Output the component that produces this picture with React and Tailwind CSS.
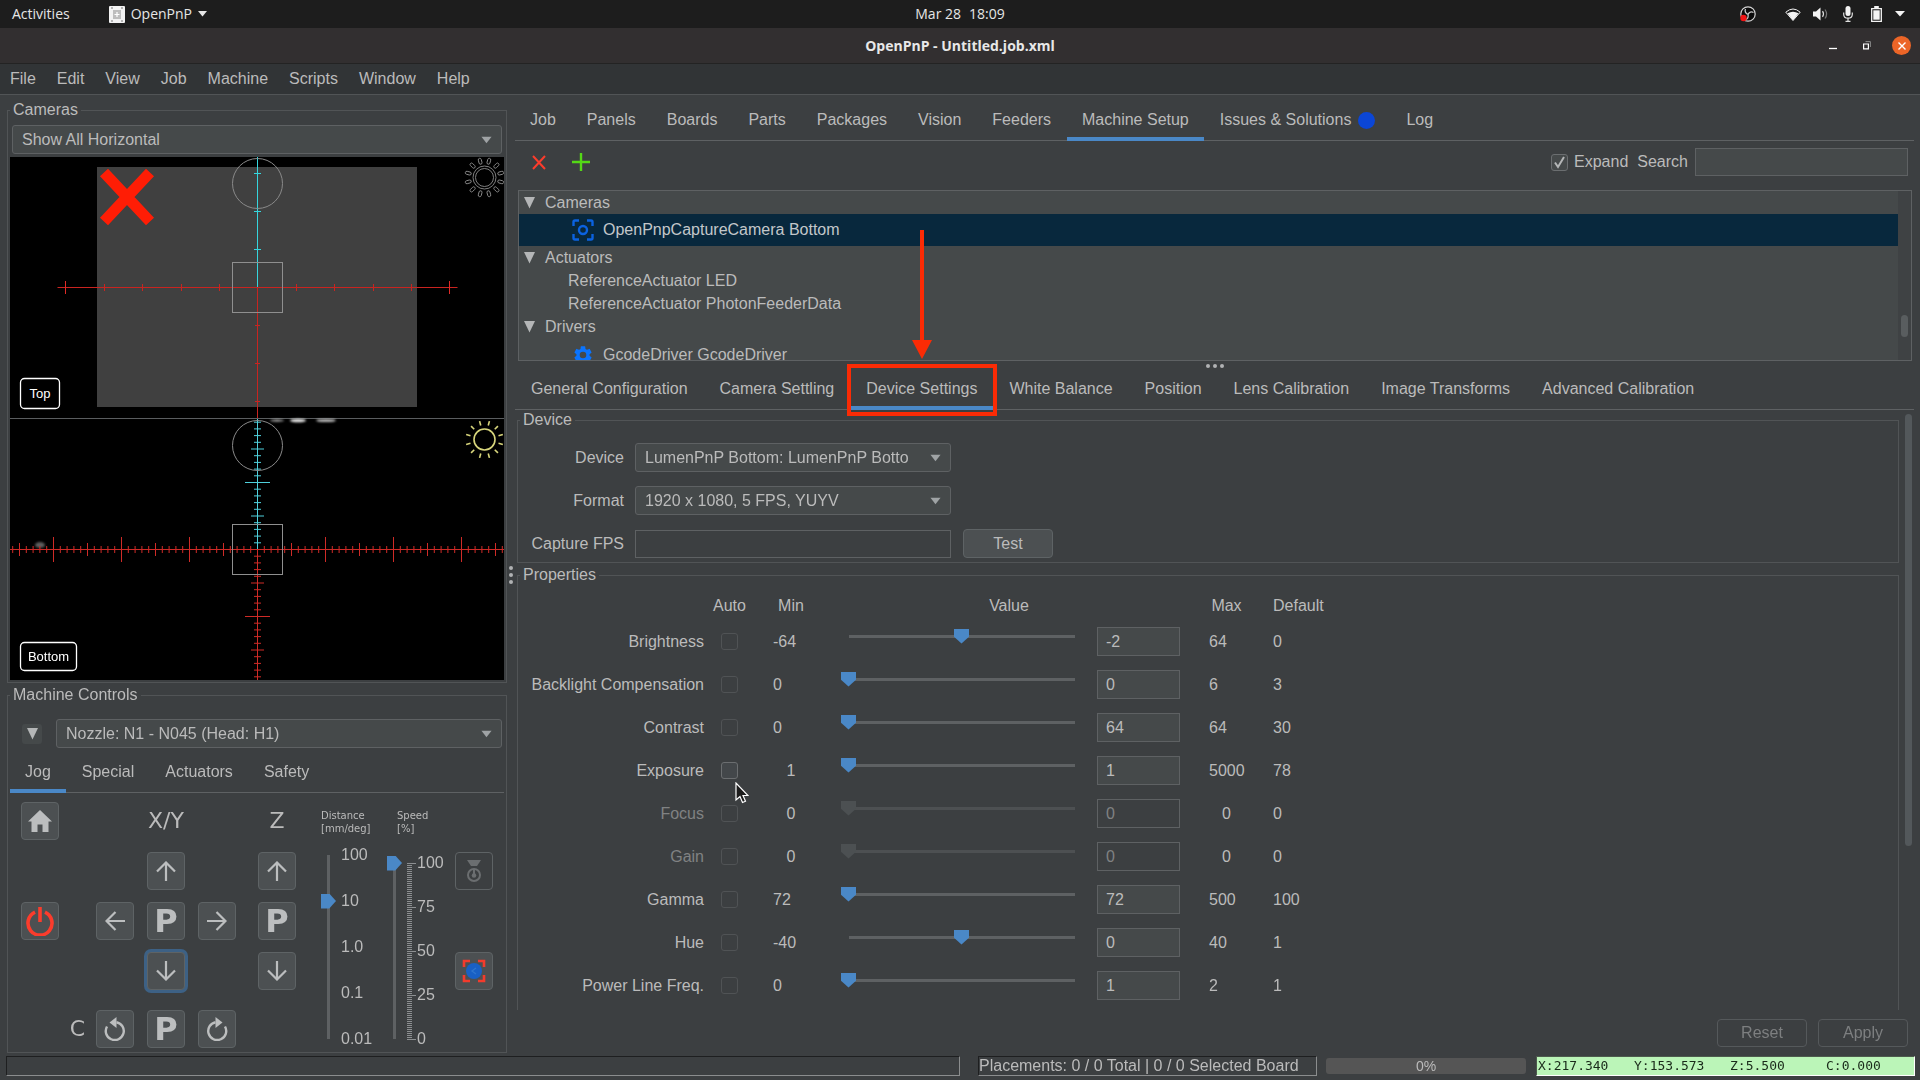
import React from "react";

const UI_FONT = "font-['Liberation_Sans',Arial,sans-serif]";
const SHELL_FONT = "font-['Open_Sans','Noto_Sans',sans-serif]";

const MENUS = ["File", "Edit", "View", "Job", "Machine", "Scripts", "Window", "Help"];
const MAIN_TABS = ["Job", "Panels", "Boards", "Parts", "Packages", "Vision", "Feeders", "Machine Setup", "Issues & Solutions", "Log"];
const CAMERA_TABS = ["General Configuration", "Camera Settling", "Device Settings", "White Balance", "Position", "Lens Calibration", "Image Transforms", "Advanced Calibration"];

const PROPERTIES = [
  { name: "Brightness", min: -64, max: 64, value: -2, def: 0, pos: 50 },
  { name: "Backlight Compensation", min: 0, max: 6, value: 0, def: 3, pos: 0 },
  { name: "Contrast", min: 0, max: 64, value: 64, def: 30, pos: 0 },
  { name: "Exposure", min: 1, max: 5000, value: 1, def: 78, pos: 0, centerMin: true, auto: true },
  { name: "Focus", min: 0, max: 0, value: 0, def: 0, pos: 0, centerMin: true, centerMax: true, off: true },
  { name: "Gain", min: 0, max: 0, value: 0, def: 0, pos: 0, centerMin: true, centerMax: true, off: true },
  { name: "Gamma", min: 72, max: 500, value: 72, def: 100, pos: 0 },
  { name: "Hue", min: -40, max: 40, value: 0, def: 1, pos: 50 },
  { name: "Power Line Freq.", min: 0, max: 2, value: 1, def: 1, pos: 0 },
];

/* ---------- shell ---------- */

function TopBar() {
  return (
    <header className={`grid h-7 grid-cols-[1fr_auto_1fr] items-center bg-[#1d1d1d] text-sm text-[#e6e6e6] ${SHELL_FONT}`}>
      <div className="flex items-center">
        <button className="ml-3">Activities</button>
        <button className="ml-[39px] flex items-center">
          <svg width="16" height="17" viewBox="0 0 16 17" className="mr-[6px]">
            <rect width="16" height="17" rx="1" fill="#f2f2f2" />
            <rect x="4" y="4" width="8" height="9" fill="#bdbdbd" />
            <path d="M5.500 8.500h5M8 6v5" stroke="#fff" strokeWidth="1.200" />
            <path d="M2 2h2M12 2h2M2 15h2M12 15h2" stroke="#777" />
          </svg>
          OpenPnP
          <svg width="9" height="6" viewBox="0 0 9 6" className="ml-[6px]"><path d="M0 0h9L4.500 5.500z" fill="#e6e6e6" /></svg>
        </button>
      </div>
      <div className="flex gap-2"><span>Mar 28</span><span>18:09</span></div>
      <div className="flex items-center justify-end pr-[15px]">
        <svg width="16" height="16" viewBox="0 0 16 16" className="mr-[29px]">
          <circle cx="8" cy="8" r="7.200" fill="#0b0b0b" stroke="#d5d5d5" strokeWidth="1.200" />
          <path d="M8 8.500C5.500 7.500 4.500 5 5.500 3M8 8.500c1-2.500 3.500-3.200 5.500-2M8 8.500c.6 2.500-.5 4.500-2.500 5.200" fill="none" stroke="#c8c8c8" strokeWidth="1.300" />
          <circle cx="3.500" cy="12" r="3.200" fill="#f01414" />
        </svg>
        <svg width="16" height="13" viewBox="0 0 16 13" className="mr-3">
          <path d="M.8 4.200Q8-2.200 15.200 4.200L8 12.500z" fill="none" stroke="#f0f0f0" strokeWidth="1" />
          <path d="M2.500 5.300Q8 2 13.500 5.300L8 12.500z" fill="#f4f4f4" />
        </svg>
        <svg width="16" height="14" viewBox="0 0 16 14" className="mr-[14px]">
          <path d="M0 4.500h3L7.500.5v13L3 9.500H0z" fill="#f4f4f4" />
          <path d="M9.500 4.200q2 2.800 0 5.600" fill="none" stroke="#ddd" strokeWidth="1.200" />
          <path d="M12 2.500q3.200 4.500 0 9" fill="none" stroke="#777" strokeWidth="1.200" />
        </svg>
        <svg width="10" height="16" viewBox="0 0 10 16" className="mr-[18px]">
          <rect x="2.500" y="0" width="5" height="10" rx="2.500" fill="#f4f4f4" />
          <path d="M.7 6.500v1.700q0 4 4.300 4t4.300-4V6.500M5 12v3M2.500 15.300h5" fill="none" stroke="#e0e0e0" strokeWidth="1.200" />
        </svg>
        <svg width="11" height="16" viewBox="0 0 11 16" className="mr-[13px]">
          <path d="M.7 2.700h9.600v12.600H.7z" fill="none" stroke="#f4f4f4" strokeWidth="1.300" />
          <rect x="3.200" y="0" width="4.600" height="2.500" fill="#f4f4f4" />
          <rect x="2.300" y="4.300" width="6.400" height="9.400" fill="#f4f4f4" />
        </svg>
        <svg width="10" height="6" viewBox="0 0 10 6"><path d="M0 0h10L5 5.500z" fill="#f4f4f4" /></svg>
      </div>
    </header>
  );
}

function TitleBar() {
  return (
    <div className={`grid h-9 grid-cols-[1fr_auto_1fr] items-center border-b border-[#232323] bg-[#322f30] ${SHELL_FONT}`}>
      <span />
      <h1 className="text-sm font-bold text-[#e8e8e8]">OpenPnP - Untitled.job.xml</h1>
      <div className="flex items-center justify-end pr-[9px]">
        <button aria-label="Minimize" className="mr-[26px]">
          <svg width="8" height="8" viewBox="0 0 8 8"><path d="M0 6.500h8" stroke="#fff" strokeWidth="1.300" /></svg>
        </button>
        <button aria-label="Restore" className="mr-[21px]">
          <svg width="8" height="9" viewBox="0 0 8 9"><path d="M.6 3h4.800v4.900H.6z" fill="none" stroke="#fff" strokeWidth="1.200" /><path d="M2.500.6h4.900v5.400" fill="none" stroke="#8a8a8a" /></svg>
        </button>
        <button aria-label="Close" className="flex size-[19px] items-center justify-center rounded-full bg-[#ec6527]">
          <svg width="8" height="8" viewBox="0 0 8 8"><path d="M.5.5l7 7M7.500.5l-7 7" stroke="#fff" strokeWidth="1.400" /></svg>
        </button>
      </div>
    </div>
  );
}

function MenuBar() {
  return (
    <nav className="flex h-[31px] items-center gap-px border-b border-[#515456] bg-[#313436]">
      {MENUS.map((m) => <button key={m} className="px-[10px]">{m}</button>)}
    </nav>
  );
}

/* ---------- shared controls ---------- */

function Group({ title, className = "", children }) {
  return (
    <fieldset className={`min-w-0 border border-[#515456] ${className}`}>
      <legend className="ml-[2px] px-[3px] leading-5">{title}</legend>
      {children}
    </fieldset>
  );
}

function Tab({ label, active, pad, children }) {
  return (
    <button role="tab" aria-selected={!!active} className={`relative flex h-[42px] items-center whitespace-nowrap ${pad} ${active ? "shadow-[inset_0_-4px_0_#4a88c7]" : "shadow-[inset_0_-1px_0_#5e6163]"}`}>
      {label}
      {children}
    </button>
  );
}

function TabBar({ className = "", children }) {
  return <div role="tablist" className={`flex shadow-[inset_0_-1px_0_#5e6163] ${className}`}>{children}</div>;
}

function Select({ label, id, text, className = "" }) {
  return (
    <div className={`relative ${className}`}>
      <select id={id} aria-label={label} className="h-[29px] w-full appearance-none rounded-[3px] border border-[#5e6163] bg-[#45494a] pr-7 pl-[9px] text-[#bbbbbb]">
        <option>{text}</option>
      </select>
      <svg width="11" height="8" viewBox="0 0 12 8" className="pointer-events-none absolute top-[11px] right-[10px]"><path d="M.5.5h11L6 7.500z" fill="#9fa3a5" /></svg>
    </div>
  );
}

const DownTriangle = ({ className = "" }) => (
  <svg width="11" height="12" viewBox="0 0 11 12" className={className}><path d="M0 0h11L5.500 11.500z" fill="#b4b6b7" /></svg>
);

/* ---------- camera views ---------- */

function Sun({ cx, cy, lit }) {
  return (
    <g transform={`translate(${cx} ${cy})`} fill="none" stroke={lit ? "#d8d67c" : "#8c8c8c"}>
      <circle r={lit ? 10.5 : 11.5} strokeWidth={lit ? 1.6 : 0.9} />
      {!lit && <circle r="9" strokeWidth="0.900" />}
      {Array.from({ length: 12 }, (_, i) => (
        <g key={i} transform={`rotate(${15 + i * 30})`}>
          {lit ? <path d="M14.500 0h4.500" strokeWidth="1.600" /> : <rect x="13.800" y="-1.500" width="6" height="3" rx="1.500" strokeWidth="0.900" />}
        </g>
      ))}
    </g>
  );
}

function BottomTicks() {
  const step = 6.8;
  const arm = (i) => (i % 10 === 0 ? 12.5 : i % 5 === 0 ? 6.5 : 3.5);
  const out = [];
  for (let i = 1; i <= 36; i++) {
    for (const s of [-1, 1]) {
      const x = 257.5 + s * i * step;
      out.push(<path key={`h${s}${i}`} d={`M${x} ${549.5 - arm(i)}v${2 * arm(i)}`} stroke="#cf2b27" />);
    }
  }
  for (let i = 1; i <= 19; i++) {
    for (const s of [-1, 1]) {
      const y = 549.5 + s * i * 6.7;
      out.push(<path key={`v${s}${i}`} d={`M${257.5 - arm(i)} ${y}h${2 * arm(i)}`} stroke={s < 0 ? "#4fd0dc" : "#cf2b27"} />);
    }
  }
  return <g>{out}</g>;
}

function CameraLabel({ x, y, w, h, text }) {
  return (
    <g>
      <rect x={x} y={y} width={w} height={h} rx="4" fill="#000" stroke="#fff" strokeWidth="1.300" />
      <text x={x + w / 2} y={y + h / 2 + 4} textAnchor="middle" fill="#fff" fontSize="13">{text}</text>
    </g>
  );
}

function CameraViews() {
  return (
    <svg viewBox="10 157 494 523" className="mx-[2px] mt-[3px] mb-[2px] block h-auto w-[calc(100%-4px)] bg-black" role="img" aria-label="Camera views">
      <defs><filter id="smudge"><feGaussianBlur stdDeviation="1" /></filter></defs>
      <rect x="97" y="167" width="320" height="240" fill="#404040" />
      <path d="M104 172.500l46 49M150 172.500l-46 49" stroke="#ff1d05" strokeWidth="11" />
      <path d="M57.500 287.500h400M257.500 287.500v131" stroke="#c92420" />
      <path d="M65.500 281v13M449.500 281v13" stroke="#e02a26" />
      <path d="M104.500 284v7M142.500 284v7M181.500 284v7M219.500 284v7M296.500 284v7M334.500 284v7M373.500 284v7M411.500 284v7" stroke="#c92420" />
      <path d="M255 325.500h5M255 363.500h5M255 401.500h5" stroke="#c92420" />
      <path d="M257.500 157v130M254 173.500h7M254 211.500h7M254 249.500h7" stroke="#35d6de" fill="none" />
      <circle cx="257.500" cy="183.500" r="25" fill="none" stroke="#8a8a8a" />
      <rect x="232.500" y="262.500" width="50" height="50" fill="none" stroke="#8f8f8f" />
      <Sun cx={484.500} cy={177.500} />
      <CameraLabel x={20.500} y={378.500} w={39} h={30} text="Top" />

      <path d="M10 418.500h494" stroke="#5a5d5f" />
      <g filter="url(#smudge)" fill="#e8e8e8">
        <ellipse cx="277" cy="420.500" rx="7" ry="1.200" opacity="0.700" />
        <ellipse cx="298" cy="420.500" rx="8" ry="1.800" />
        <ellipse cx="326" cy="420.500" rx="10" ry="1.600" opacity="0.800" />
        <ellipse cx="40" cy="545" rx="5" ry="3" opacity="0.400" />
      </g>
      <path d="M10 549.500h494M257.500 549.500v130.500" stroke="#cf2b27" />
      <path d="M257.500 419v130" stroke="#4fd0dc" />
      <BottomTicks />
      <circle cx="257.500" cy="445.500" r="25" fill="none" stroke="#8a8a8a" />
      <rect x="232.500" y="524.500" width="50" height="50" fill="none" stroke="#8f8f8f" />
      <Sun cx={484.500} cy={439.500} lit />
      <CameraLabel x={20.500} y={642.500} w={56} h={28} text="Bottom" />
    </svg>
  );
}

/* ---------- jog controls ---------- */

function JogButton({ label, className = "", children }) {
  return (
    <button aria-label={label} className={`flex size-[38px] items-center justify-center rounded-[4px] border border-[#5e6365] bg-[#4c5052] ${className}`}>
      {children}
    </button>
  );
}

const Arrow = ({ className = "" }) => (
  <svg width="20" height="20" viewBox="0 0 20 20" className={className}><path d="M10 20V1.500M1 10.500L10 1.500l9 9" fill="none" stroke="#bcbebf" strokeWidth="2.200" /></svg>
);
const Park = () => <span className="font-['DejaVu_Sans',sans-serif] text-[32px] leading-none font-bold text-[#bcbebf]">P</span>;
const Rotate = ({ className = "" }) => (
  <svg width="22" height="24" viewBox="0 0 22 24" className={className}>
    <path d="M12.500 5.200a9 9 0 1 1-9.500 4.300" fill="none" stroke="#bcbebf" strokeWidth="2.400" />
    <path d="M5.500 5.500L12.500 0v11z" fill="#bcbebf" />
  </svg>
);

const V_SLIDER = "w-[15px] appearance-none bg-transparent bg-[linear-gradient(#5e6163,#5e6163)] bg-no-repeat bg-center [direction:rtl] [writing-mode:vertical-lr] [&::-webkit-slider-thumb]:size-[15px] [&::-webkit-slider-thumb]:appearance-none [&::-webkit-slider-thumb]:bg-[#4a88c7] [&::-webkit-slider-thumb]:[clip-path:polygon(0_0,55%_0,100%_50%,55%_100%,0_100%)]";

function JogPanel() {
  const heading = "font-['DejaVu_Sans',sans-serif] text-[22px] leading-none";
  return (
    <div className="flex pt-[9px] pb-1 pl-[13px]">
      <div className="grid h-fit grid-cols-[38px_37px_51px_51px_60px_38px] grid-rows-[50px_50px_50px_58px_38px]">
        <JogButton label="Home">
          <svg width="24" height="22" viewBox="0 0 24 22"><path d="M12 0L0 11.500h3.500V22h6v-7.500h5V22h6V11.500H24z" fill="#bcbebf" /></svg>
        </JogButton>
        <span className={`col-start-4 flex h-[38px] w-[38px] items-center justify-center ${heading}`}>X/Y</span>
        <span className={`col-start-6 flex h-[38px] items-center justify-center ${heading}`}>Z</span>

        <JogButton label="Y plus" className="col-start-4"><Arrow /></JogButton>
        <JogButton label="Z plus" className="col-start-6"><Arrow /></JogButton>

        <JogButton label="Power" className="col-start-1">
          <svg width="28" height="30" viewBox="0 0 28 30" fill="none" stroke="#fb3c2c" strokeWidth="3.600"><path d="M9 6.200a12 12 0 1 0 10 0M14 1v15" /></svg>
        </JogButton>
        <JogButton label="X minus" className="col-start-3"><Arrow className="-rotate-90" /></JogButton>
        <JogButton label="Park X/Y"><Park /></JogButton>
        <JogButton label="X plus"><Arrow className="rotate-90" /></JogButton>
        <JogButton label="Park Z"><Park /></JogButton>

        <JogButton label="Y minus" className="col-start-4 ring-3 ring-[#3d6185]"><Arrow className="rotate-180" /></JogButton>
        <JogButton label="Z minus" className="col-start-6"><Arrow className="rotate-180" /></JogButton>

        <span className={`col-start-2 flex h-[38px] items-center justify-center ${heading}`}>C</span>
        <JogButton label="Rotate counterclockwise"><Rotate /></JogButton>
        <JogButton label="Park rotation"><Park /></JogButton>
        <JogButton label="Rotate clockwise"><Rotate className="-scale-x-100" /></JogButton>
      </div>

      <div className="ml-[25px] w-[66px] shrink-0 pt-[7px]">
        <label htmlFor="distance" className="block font-['DejaVu_Sans',sans-serif] text-[10px] leading-[13px]">Distance<br />[mm/deg]</label>
        <div className="mt-[11px] flex items-center gap-[5px]">
          <input id="distance" type="range" min="0" max="4" defaultValue="3" className={`h-[199px] bg-[length:3px_184px] ${V_SLIDER}`} />
          <div className="flex h-[202px] flex-col justify-between leading-[18px]">
            {["100", "10", "1.0", "0.1", "0.01"].map((t) => <span key={t}>{t}</span>)}
          </div>
        </div>
      </div>

      <div className="w-[68px] shrink-0 pt-[7px]">
        <label htmlFor="speed" className="ml-[10px] block font-['DejaVu_Sans',sans-serif] text-[10px] leading-[13px]">Speed<br />[%]</label>
        <div className="mt-[19px] flex items-center">
          <input id="speed" type="range" min="0" max="100" defaultValue="100" className={`h-[191px] bg-[length:3px_176px] ${V_SLIDER}`} />
          <svg width="10" height="177" viewBox="0 0 10 177" className="ml-[5px]" stroke="#8c8f91">
            {Array.from({ length: 88 }, (_, i) => <path key={i} d={`M0 ${i * 2 + 0.5}h5`} />)}
            <path d="M0 .5h9M5 44.500h4M5 88.500h4M5 132.500h4M0 176.500h9" />
          </svg>
          <div className="flex h-[194px] flex-col justify-between leading-[18px]">
            {[100, 75, 50, 25, 0].map((t) => <span key={t}>{t}</span>)}
          </div>
        </div>
      </div>

      <div className="flex flex-col gap-[62px] pt-[50px]">
        <JogButton label="Nozzle to camera" className="bg-transparent">
          <svg width="16" height="24" viewBox="0 0 16 24"><path d="M1 1h14l-4 6H5z" fill="#6b6e70" /><circle cx="8" cy="16" r="6" fill="none" stroke="#6b6e70" strokeWidth="2" /><path d="M8 10v6" stroke="#6b6e70" strokeWidth="2" /><circle cx="8" cy="16.500" r="2.300" fill="#6b6e70" /></svg>
        </JogButton>
        <JogButton label="Position camera">
          <svg width="24" height="24" viewBox="0 0 24 24"><path d="M2 8V2h6M16 2h6v6M22 16v6h-6M8 22H2v-6" fill="none" stroke="#f33b2c" strokeWidth="2.600" /><circle cx="12" cy="12" r="8" fill="#1960c4" /><path d="M14 9l-4 3 4 3" fill="none" stroke="#2f75cc" strokeWidth="1.300" /></svg>
        </JogButton>
      </div>
    </div>
  );
}

function LeftPanel() {
  return (
    <aside className="flex w-[26%] min-w-[500px] flex-col">
      <Group title="Cameras" className="mt-[5px]">
        <Select label="Camera layout" text="Show All Horizontal" className="mx-1 mt-[5px]" />
        <CameraViews />
      </Group>
      <Group title="Machine Controls" className="mt-[2px]">
        <div className="mt-[14px] flex items-center pr-1 pl-[14px]">
          <button aria-label="Collapse" className="mr-[14px] flex size-[20px] items-center justify-center rounded-[3px] bg-[#45494a]"><DownTriangle /></button>
          <Select label="Tool" text="Nozzle: N1 - N045 (Head: H1)" className="flex-1" />
        </div>
        <TabBar className="mx-[2px] mt-[3px] gap-px">
          {["Jog", "Special", "Actuators", "Safety"].map((t) => <Tab key={t} label={t} active={t === "Jog"} pad="px-[15px]" />)}
        </TabBar>
        <JogPanel />
      </Group>
    </aside>
  );
}

/* ---------- machine setup ---------- */

function TreeGroup({ label }) {
  return <div className="flex h-[23px] items-center pl-[5px]"><DownTriangle className="mr-[10px]" />{label}</div>;
}

function Tree() {
  return (
    <div className="mr-[2px] ml-[3px] flex h-[171px] overflow-hidden border border-[#5e6163] bg-[#45494a]">
      <div role="tree" className="flex-1">
        <TreeGroup label="Cameras" />
        <div role="treeitem" aria-selected="true" className="flex h-8 items-center bg-[#08283d] pl-[53px] text-[#c3c7ca]">
          <svg width="22" height="22" viewBox="0 0 22 22" className="mr-[9px]" fill="none" stroke="#0b62e0" strokeWidth="2.400"><path d="M1.500 7V3q0-1.500 1.500-1.500h4M15 1.500h4q1.500 0 1.500 1.500v4M20.500 15v4q0 1.500-1.500 1.500h-4M7 20.500H3q-1.500 0-1.500-1.500v-4" /><circle cx="11" cy="11" r="4" /></svg>
          OpenPnpCaptureCamera Bottom
        </div>
        <TreeGroup label="Actuators" />
        <div role="treeitem" className="flex h-[23px] items-center pl-[49px]">ReferenceActuator LED</div>
        <div role="treeitem" className="flex h-[23px] items-center pl-[49px]">ReferenceActuator PhotonFeederData</div>
        <TreeGroup label="Drivers" />
        <div role="treeitem" className="flex h-[34px] items-center pl-[53px]">
          <svg width="22" height="22" viewBox="0 0 24 24" className="mr-[9px]" fill="#0a74ff"><path d="M19.140 12.940c.04-.3.060-.61.060-.94s-.02-.64-.07-.94l2.030-1.580a.49.49 0 0 0 .12-.61l-1.920-3.320a.49.49 0 0 0-.59-.22l-2.390.96c-.5-.38-1.030-.7-1.620-.94l-.36-2.540a.48.48 0 0 0-.48-.41h-3.840a.48.48 0 0 0-.47.410l-.36 2.540c-.59.240-1.130.570-1.620.94l-2.390-.96a.48.48 0 0 0-.59.220L2.740 8.870a.48.48 0 0 0 .12.610l2.030 1.580c-.05.3-.09.630-.09.940s.02.640.070.94l-2.030 1.580a.49.49 0 0 0-.12.610l1.920 3.320c.12.220.37.290.59.220l2.390-.96c.5.380 1.030.7 1.620.94l.36 2.540c.05.240.24.410.48.410h3.840c.24 0 .44-.17.470-.41l.36-2.540c.59-.24 1.130-.56 1.620-.94l2.390.96c.22.080.47 0 .59-.22l1.920-3.320a.48.48 0 0 0-.12-.61zM12 15.600A3.600 3.600 0 1 1 12 8.400a3.600 3.600 0 0 1 0 7.200z" /></svg>
          GcodeDriver GcodeDriver
        </div>
      </div>
      <div className="w-[13px] bg-[#3f4244]"><div className="mx-auto mt-[124px] h-[22px] w-[7px] rounded-full bg-[#595d5f]" /></div>
    </div>
  );
}

function Toolbar() {
  return (
    <div className="flex items-center pt-[7px] pr-[6px] pb-[14px] pl-4">
      <button aria-label="Delete">
        <svg width="16" height="16" viewBox="0 0 16 16"><path d="M2 2l12 13M14 2L2 15" stroke="#fb3c2c" strokeWidth="2" /></svg>
      </button>
      <button aria-label="Add" className="ml-[25px]">
        <svg width="18" height="18" viewBox="0 0 18 18"><path d="M9 0v18M0 9h18" stroke="#54d816" strokeWidth="2.400" /></svg>
      </button>
      <label className="ml-auto flex items-center">
        <span className="relative mr-[6px] size-[17px]">
          <input type="checkbox" defaultChecked className="block size-[17px] appearance-none rounded-[3px] border border-[#6b6e70] bg-[#45494a]" />
          <svg width="13" height="13" viewBox="0 0 13 13" className="pointer-events-none absolute top-[2px] left-[2px]"><path d="M2 6.500l3 4.500 6-10" fill="none" stroke="#b4b6b7" strokeWidth="2" /></svg>
        </span>
        Expand
      </label>
      <label className="ml-[9px] flex items-center gap-[7px]">
        Search
        <input type="text" className="h-7 w-[213px] border border-[#5e6163] bg-[#45494a] px-2" />
      </label>
    </div>
  );
}

const Dots = ({ className = "" }) => (
  <div className={`flex gap-[3px] ${className}`}>
    {[0, 1, 2].map((i) => <span key={i} className="size-[4px] rounded-full bg-[#b0b2b3]" />)}
  </div>
);

function DeviceGroup() {
  return (
    <Group title="Device">
      <div className="mt-[13px] grid grid-cols-[106px_316px_91px] items-center gap-x-[11px] gap-y-[14px] pb-1">
        <label htmlFor="device" className="text-right">Device</label>
        <Select id="device" text="LumenPnP Bottom: LumenPnP Botto" />
        <span />
        <label htmlFor="format" className="text-right">Format</label>
        <Select id="format" text="1920 x 1080, 5 FPS, YUYV" />
        <span />
        <label htmlFor="fps" className="text-right">Capture FPS</label>
        <input id="fps" type="text" readOnly className="h-7 w-full border border-[#5e6163] bg-transparent px-2" />
        <button className="ml-px h-[29px] rounded-[4px] border border-[#5e6365] bg-[#4c5052]">Test</button>
      </div>
    </Group>
  );
}

const H_SLIDER = "mr-[15px] mb-[11px] h-[15px] w-[241px] appearance-none bg-transparent bg-[length:226px_3px] bg-center bg-no-repeat [&::-webkit-slider-thumb]:size-[15px] [&::-webkit-slider-thumb]:appearance-none [&::-webkit-slider-thumb]:[clip-path:polygon(0_0,100%_0,100%_55%,50%_100%,0_55%)]";
const H_SLIDER_ON = "bg-[linear-gradient(#5e6163,#5e6163)] [&::-webkit-slider-thumb]:bg-[#4a88c7]";
const H_SLIDER_OFF = "bg-[linear-gradient(#4d5052,#4d5052)] [&::-webkit-slider-thumb]:bg-[#4c5052]";

function Cursor() {
  return (
    <svg width="14" height="22" viewBox="0 0 14 22" className="pointer-events-none absolute top-5 left-[14px]">
      <path d="M1 1v17l4-3.500L7.500 20.500l3-1.300L8 13.500h5z" fill="#1c1c1c" stroke="#fff" strokeWidth="1.200" />
    </svg>
  );
}

function PropertyRow({ p }) {
  const id = p.name.toLowerCase().replace(/[^a-z]+/g, "-");
  return (
    <tr className="h-[43px]">
      <th scope="row" className={`text-right font-normal ${p.off ? "text-[#808283]" : ""}`}>{p.name}</th>
      <td>
        <span className="relative mx-auto block size-[17px]">
          <input type="checkbox" aria-label={`${p.name} auto`} className={`block size-[17px] appearance-none rounded-[3px] border ${p.auto ? "border-[#6b6e70] bg-[#43474a]" : "border-[#505355]"}`} />
          {p.auto && <Cursor />}
        </span>
      </td>
      <td><span className={`mx-auto block w-9 ${p.centerMin ? "text-center" : ""}`}>{p.min}</span></td>
      <td>
        <div className="flex items-center justify-center">
          <input type="range" aria-label={`${p.name} slider`} min="0" max="100" defaultValue={p.pos} disabled={p.off} className={`${H_SLIDER} ${p.off ? H_SLIDER_OFF : H_SLIDER_ON}`} />
          <input id={id} type="text" aria-label={`${p.name} value`} defaultValue={p.value} disabled={p.off} className={`h-[29px] w-[83px] border border-[#5e6163] px-2 ${p.off ? "bg-transparent text-[#808283]" : "bg-[#45494a]"}`} />
        </div>
      </td>
      <td><span className={`mx-auto block w-[35px] ${p.centerMax ? "text-center" : ""}`}>{p.max}</span></td>
      <td className="pl-[14px]">{p.def}</td>
    </tr>
  );
}

function PropertiesGroup() {
  return (
    <Group title="Properties" className="mt-[2px] flex-1 border-b-0">
      <table className="w-full table-fixed border-collapse">
        <colgroup>
          <col className="w-[186px]" /><col className="w-[51px]" /><col className="w-[72px]" /><col className="w-[367px]" /><col className="w-[65px]" /><col />
        </colgroup>
        <thead>
          <tr className="h-[35px] [&>th]:pt-[6px] [&>th]:font-normal">
            <th /><th>Auto</th><th>Min</th><th className="pr-[3px]">Value</th><th>Max</th><th className="pl-[14px] text-left">Default</th>
          </tr>
        </thead>
        <tbody>{PROPERTIES.map((p) => <PropertyRow key={p.name} p={p} />)}</tbody>
      </table>
    </Group>
  );
}

function RightPanel() {
  return (
    <main className="flex min-w-0 flex-1 flex-col pr-[6px]">
      <TabBar className="mt-1 gap-px">
        {MAIN_TABS.map((t) => (
          <Tab key={t} label={t} active={t === "Machine Setup"} pad="px-[15px]">
            {t.startsWith("Issues") && <span className="ml-[7px] size-[17px] rounded-full bg-[#0b46d6]" />}
          </Tab>
        ))}
      </TabBar>
      <Toolbar />
      <Tree />
      <div className="flex h-[7px] items-end justify-center"><Dots /></div>
      <TabBar>
        {CAMERA_TABS.map((t) => (
          <Tab key={t} label={t} active={t === "Device Settings"} pad="px-4">
            {t === "Device Settings" && (
              <span className="pointer-events-none absolute -top-1 -right-1 -bottom-[6px] -left-[3px] z-10 border-4 border-[#fb2b05]">
                <svg width="20" height="129" viewBox="0 0 20 129" className="absolute bottom-[calc(100%+9px)] left-1/2 -translate-x-1/2"><path d="M8 0h4v110h8l-10 19L0 110h8z" fill="#fb2b05" /></svg>
              </span>
            )}
          </Tab>
        ))}
      </TabBar>
      <div className="flex flex-1">
        <div className="ml-[2px] flex min-w-0 flex-1 flex-col">
          <DeviceGroup />
          <PropertiesGroup />
        </div>
        <div className="mt-1 mr-[2px] ml-[6px] h-[72%] w-[7px] rounded-full bg-[#53585b]" />
      </div>
      <div className="flex justify-end gap-[11px] pt-[9px] pr-[6px] pb-[7px] text-[#7d7f80]">
        <button disabled className="h-7 w-[90px] rounded-[4px] border border-[#55595b]">Reset</button>
        <button disabled className="h-7 w-[90px] rounded-[4px] border border-[#55595b]">Apply</button>
      </div>
    </main>
  );
}

function StatusBar() {
  const sunken = "h-5 border border-t-[#1e1f20] border-r-[#8b8d8e] border-b-[#8b8d8e] border-l-[#1e1f20]";
  return (
    <footer className="flex items-center pt-[2px] pr-[5px] pb-1 pl-[6px]">
      <div className={`flex-1 ${sunken}`} />
      <div className={`ml-[18px] w-[339px] whitespace-nowrap leading-[18px] ${sunken}`}>Placements: 0 / 0 Total | 0 / 0 Selected Board</div>
      <div role="progressbar" aria-label="Progress" aria-valuenow={0} className="ml-[9px] h-4 w-[200px] rounded-[3px] bg-[#555555] text-center text-sm leading-4">0%</div>
      <div className="ml-[10px] flex h-5 w-[379px] items-center border border-t-[#4d5a4d] border-r-white border-b-white border-l-[#4d5a4d] bg-[#bbf5b8] pl-px font-['DejaVu_Sans_Mono',monospace] text-[13px] text-[#1a2a1a]">
        {["X:217.340", "Y:153.573", "Z:5.500", "C:0.000"].map((t) => <span key={t} className="w-24 shrink-0 last:w-auto">{t}</span>)}
      </div>
    </footer>
  );
}

export default function App() {
  return (
    <div className={`flex min-h-screen flex-col bg-[#3c3f41] text-base leading-5 text-[#bbbbbb] ${UI_FONT}`}>
      <TopBar />
      <TitleBar />
      <MenuBar />
      <div className="flex flex-1 pl-[7px]">
        <LeftPanel />
        <div className="flex w-2 items-center justify-center"><Dots className="flex-col" /></div>
        <RightPanel />
      </div>
      <StatusBar />
    </div>
  );
}
